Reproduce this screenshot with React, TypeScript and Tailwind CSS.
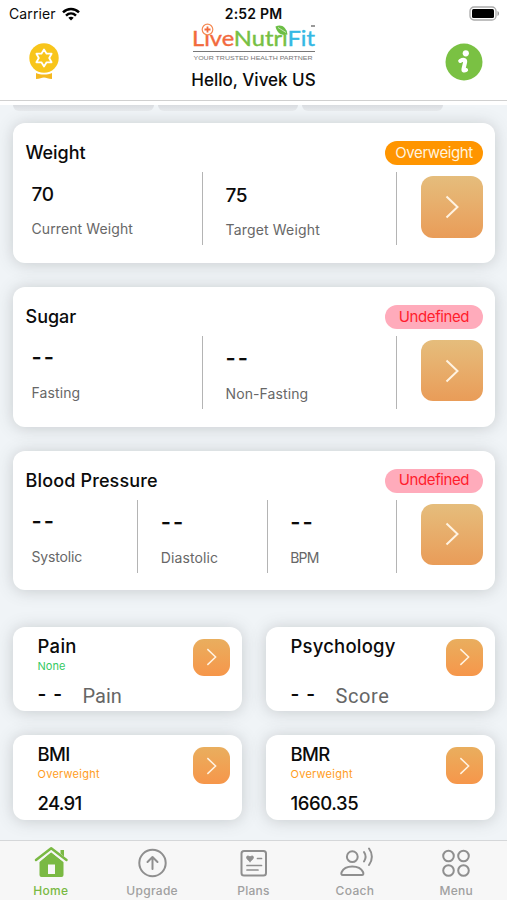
import clsx from 'clsx';
import type { ReactNode } from 'react';

type Metric = { value: string; label: string; labelClass: string };

function Arrow({ small = false }: { small?: boolean }) {
  return (
    <button
      type="button"
      className={clsx(
        'flex shrink-0 items-center justify-center bg-linear-to-b',
        small
          ? 'size-[37px] rounded-[11px] from-[#e9ae5e] to-[#f6964a]'
          : 'size-[61.5px] rounded-[12px] from-[#e5bd7c] to-[#e99c58]',
      )}
    >
      <svg
        viewBox="0 0 14 24"
        className={small ? 'h-[18px] w-[11px]' : 'h-6 w-3.5'}
        fill="none"
        stroke="#fff3e2"
        strokeWidth="2"
      >
        <path d="M1.5 1.5 12.5 12 1.5 22.5" />
      </svg>
    </button>
  );
}

function MetricCard({
  title, titleClass, badge, badgeClass, metrics,
}: { title: string; titleClass?: string; badge: string; badgeClass: string; metrics: Metric[] }) {
  return (
    <section className="h-[139.8px] rounded-[12px] bg-white shadow-[0_1px_16px_rgba(80,85,90,0.26)]">
      <div className="flex h-[49px] items-start justify-between pt-[17px] pr-3 pl-[12.5px]">
        <h2 className={clsx('text-[18px] leading-[26px] font-medium', titleClass)}>{title}</h2>
        <span className={clsx('mt-px flex h-6 w-[98px] items-center justify-center rounded-full text-[15px]', badgeClass)}>
          {badge}
        </span>
      </div>
      <div className="flex">
        <div className="-ml-1 flex h-[73px] w-[388px]">
          {metrics.map((m, i) => (
            <div key={m.label} className={clsx('flex-1 border-r border-[#b4b4b4] pl-[22.5px]', i > 0 && 'pt-px')}>
              {m.value === '--' ? (
                <div className="mt-[8px] h-[28px] text-[22px] leading-[26px] font-semibold tracking-[2px]">--</div>
              ) : (
                <div className="mt-[10px] h-[26px] text-[19px] leading-[26px] font-medium tracking-[-0.3px]">{m.value}</div>
              )}
              <div className={clsx('mt-[11px] text-[14px] leading-5 whitespace-nowrap text-[#676767]', m.labelClass)}>
                {m.label}
              </div>
            </div>
          ))}
        </div>
        <div className="mt-1 ml-6">
          <Arrow />
        </div>
      </div>
    </section>
  );
}

function SmallCard({
  title, titleClass, status, statusClass, children,
}: { title: string; titleClass: string; status?: string; statusClass?: string; children: ReactNode }) {
  return (
    <section className="flex h-[84.5px] justify-between rounded-[12px] bg-white pr-3 pl-[24.500px] shadow-[0_1px_16px_rgba(80,85,90,0.26)]">
      <div>
        <h2 className={clsx('mt-[7px] text-[18.5px] leading-6 font-medium', titleClass)}>{title}</h2>
        <p className={clsx('h-4 text-[11px] leading-4', statusClass)}>{status}</p>
        <div className="mt-[8px] flex h-7 items-center whitespace-nowrap">{children}</div>
      </div>
      <div className="mt-3">
        <Arrow small />
      </div>
    </section>
  );
}

function Unit({ name, className }: { name: string; className?: string }) {
  return (
    <>
      <span className="mt-[-1px] w-[45px] text-[19px] font-semibold tracking-[7px]">--</span>
      <span className={clsx("mt-px font-['Roboto',sans-serif] text-[20px] text-[#666]", className)}>{name}</span>
    </>
  );
}

function Logo() {
  return (
    <svg viewBox="0 0 124 40" className="h-10 w-[124px] overflow-visible" fontFamily="Lato, sans-serif">
      <text x="0" y="23.500" fontSize="21.500" textLength="123" lengthAdjust="spacingAndGlyphs" strokeWidth=".4">
        <tspan fill="#f26a3d" stroke="#f26a3d">Live</tspan>
        <tspan fill="#76c043" stroke="#76c043">Nutri</tspan>
        <tspan fill="#35b8e4" stroke="#35b8e4">Fit</tspan>
      </text>
      <circle cx="15.500" cy="7.500" r="5.300" fill="#fff" stroke="#f58b55" strokeWidth="1.200" />
      <path d="M15.500 4.500v6M12.500 7.500h6" stroke="#f26a3d" strokeWidth="1.800" />
      <path d="M83.500 4.500c5.500-2.500 10.500-.5 12 8-6.500 1.500-10.500-1.500-12-8Z" fill="#6cbe45" />
      <path d="m86 5.500 8 5" stroke="#fff" strokeWidth=".6" />
      <path d="M119 4h4" stroke="#555" strokeWidth="1.200" />
      <path d="M1 29.500h122" stroke="#777" />
      <text x="1.500" y="38" fontSize="5.800" textLength="119" lengthAdjust="spacingAndGlyphs" fill="#777" fontFamily="Liberation Sans, sans-serif">
        YOUR TRUSTED HEALTH PARTNER
      </text>
    </svg>
  );
}

function StatusBar() {
  return (
    <div className="flex h-[26px] items-center justify-between pt-px pr-[7px] pl-[9px] text-[14px]">
      <div className="flex w-[100px] items-center gap-1.5 tracking-[0.1px]">
        Carrier
        <svg viewBox="0 0 18 14" className="h-3.5 w-[18px]" fill="none" stroke="#000" strokeWidth="2.500">
          <path d="M1 5.300c4.600-4.400 11.400-4.400 16 0M4 8.600c2.900-2.700 7.100-2.700 10 0" />
          <path d="M6.300 10.700c1.600-1.400 3.800-1.400 5.400 0L9 13.600Z" fill="#000" stroke="none" />
        </svg>
      </div>
      <div className="font-semibold tracking-[0.2px]">2:52 PM</div>
      <div className="flex w-[102px] justify-end">
        <svg viewBox="0 0 31 15" className="h-[15px] w-[31px]">
          <rect x="1" y="1" width="26" height="13" rx="4" fill="#fff" stroke="#aaa" strokeWidth="1.300" />
          <rect x="3" y="3" width="22" height="9" rx="1.500" />
          <path d="M28.500 5v5c2-.8 2-4.200 0-5Z" fill="#999" />
        </svg>
      </div>
    </div>
  );
}

function MedalIcon() {
  return (
    <svg viewBox="0 0 30 37" className="h-[37px] w-[30px]">
      <path d="M7 30c5 2 11 2 16 0v6c-4-.3-5.500-1.500-8-1.500S11 35.700 7 36Z" fill="#f5b921" />
      <circle cx="15" cy="15" r="14.700" fill="#f8c51b" />
      <path
        d="m15 6.500 2.600 4.200h5l-2.400 4.300 2.400 4.300h-5L15 23.500l-2.600-4.200h-5L9.800 15l-2.400-4.300h5Z"
        fill="none"
        stroke="#fff"
        strokeWidth="1.800"
        strokeLinejoin="round"
      />
    </svg>
  );
}

function InfoIcon() {
  return (
    <svg viewBox="0 0 38 38" className="size-[38px]">
      <circle cx="19" cy="19" r="18.500" fill="#7ac143" />
      <circle cx="20.800" cy="10.300" r="3.100" fill="#fff" />
      <path
        d="M15.200 18c1.500-.9 3.300-1.400 4.300-1 .9.400.8 1.300.6 2.300l-1.600 6.700c-.3 1.700.8 2 2.600 1"
        fill="none"
        stroke="#fff"
        strokeWidth="4"
        strokeLinecap="round"
        strokeLinejoin="round"
      />
    </svg>
  );
}

const outline = {
  viewBox: '0 0 36 32',
  className: 'h-8 w-9',
  fill: 'none',
  stroke: 'currentColor',
  strokeWidth: 2,
  strokeLinecap: 'round',
  strokeLinejoin: 'round',
} as const;

const tabs = [
  {
    label: 'Home',
    icon: (
      <svg viewBox="0 0 36 32" className="h-8 w-9" fill="currentColor">
        <path
          fillRule="evenodd"
          d="M18 6 30.500 16v13a2 2 0 0 1-2 2H8.500a2 2 0 0 1-2-2V16ZM15 18.500V28h7v-9.500Z"
        />
        <path d="M3 15 18.200 3 33.500 15" fill="none" stroke="#f7f7f7" strokeWidth="5" />
        <path d="M27.500 4h3.500v6.500l-3.500-3Z" />
        <path d="M3 14 18.200 2.200 33.500 14" fill="none" stroke="currentColor" strokeWidth="2.500" strokeLinecap="round" strokeLinejoin="round" />
      </svg>
    ),
  },
  {
    label: 'Upgrade',
    icon: (
      <svg {...outline}>
        <circle cx="18.500" cy="17" r="13.200" />
        <path d="M18.500 23V11.500M13.500 16l5-5 5 5" />
      </svg>
    ),
  },
  {
    label: 'Plans',
    icon: (
      <svg {...outline}>
        <rect x="5.500" y="5" width="24.500" height="24.500" rx="2.500" />
        <path d="M21.500 12.500h4M11 19.500h14.500M11 24h11" strokeWidth="1.700" />
        <path d="M14 15.500c-6-4-3-7 0-4.500 3-2.500 6 .5 0 4.500Z" fill="currentColor" strokeWidth="1" />
      </svg>
    ),
  },
  {
    label: 'Coach',
    icon: (
      <svg {...outline}>
        <circle cx="15.300" cy="10.700" r="5.400" />
        <path d="M6 29c-1.800 0-2-1.500-1.300-3C8 18.500 22.500 18.500 26 26c.7 1.500.5 3-1.300 3ZM27 6c2 3 2 6.500 0 9.500M32 2.500c3.800 5 3.800 11.500 0 16.500" />
      </svg>
    ),
  },
  {
    label: 'Menu',
    icon: (
      <svg {...outline}>
        <circle cx="10.500" cy="10" r="5.300" />
        <circle cx="25.500" cy="10" r="5.300" />
        <circle cx="10.500" cy="24.500" r="5.300" />
        <circle cx="25.500" cy="24.500" r="5.300" />
      </svg>
    ),
  },
];

export default function App() {
  return (
    <div className="flex h-[900px] w-[507px] flex-col overflow-hidden bg-[#f0f4f7] font-['Inter',sans-serif] text-[#0b0b0b]">
      <header className="h-[105px] shrink-0 bg-white">
        <div className="h-[101px] border-b border-[#d0d0d0]">
          <StatusBar />
          <div className="flex justify-between pr-[24px] pl-[29px]">
            <div className="w-[60px] pt-[17px]"><MedalIcon /></div>
            <div className="-mt-1 flex flex-col items-center">
              <Logo />
              <h1 className="mt-[5px] text-[17px] leading-[26px] font-medium whitespace-nowrap">Hello, Vivek US</h1>
            </div>
            <div className="flex w-[65px] justify-end pt-[17px]"><InfoIcon /></div>
          </div>
        </div>
      </header>

      <main className="flex flex-1 flex-col pr-3 pl-[13px]">
        <div className="flex h-1.5 gap-1">
          <div className="flex-1 rounded-b-lg bg-linear-to-b from-[#d9dce0] to-[#e8ebee]" />
          <div className="flex-1 rounded-b-lg bg-linear-to-b from-[#d9dce0] to-[#e8ebee]" />
          <div className="flex-1 rounded-b-lg bg-linear-to-b from-[#d9dce0] to-[#e8ebee]" />
          <div className="w-12" />
        </div>
        <div className="mt-3 flex flex-col gap-6">
          <MetricCard
            title="Weight"
            titleClass="tracking-[-0.05px]"
            badge="Overweight"
            badgeClass="bg-[#ff9500] text-[#fff3df] tracking-[-0.4px]"
            metrics={[
              { value: '70', label: 'Current Weight', labelClass: 'tracking-[0.1px]' },
              { value: '75', label: 'Target Weight', labelClass: 'tracking-[0.17px]' },
            ]}
          />
          <MetricCard
            title="Sugar"
            badge="Undefined"
            badgeClass="bg-[#ffabbb] text-[#ff1d2d] tracking-[-0.4px]"
            metrics={[
              { value: '--', label: 'Fasting', labelClass: 'tracking-[0.1px]' },
              { value: '--', label: 'Non-Fasting', labelClass: 'tracking-[0.1px]' },
            ]}
          />
          <MetricCard
            title="Blood Pressure"
            titleClass="tracking-[0.15px]"
            badge="Undefined"
            badgeClass="bg-[#ffabbb] text-[#ff1d2d] tracking-[-0.4px]"
            metrics={[
              { value: '--', label: 'Systolic', labelClass: 'tracking-[-0.15px]' },
              { value: '--', label: 'Diastolic', labelClass: 'tracking-[0.1px]' },
              { value: '--', label: 'BPM', labelClass: 'tracking-[-0.8px]' },
            ]}
          />
        </div>

        <div className="mt-[36.4px] grid grid-cols-2 gap-6">
          <SmallCard title="Pain" titleClass="tracking-[0.3px]" status="None" statusClass="text-[#35c962]">
            <Unit name="Pain" />
          </SmallCard>
          <SmallCard title="Psychology" titleClass="tracking-[0.2px]">
            <Unit name="Score" className="tracking-[0.6px]" />
          </SmallCard>
          <SmallCard title="BMI" titleClass="tracking-[-0.7px]" status="Overweight" statusClass="text-[#ff9d1c] tracking-[0.25px]">
            <span className="text-[18.5px] font-medium tracking-[-0.7px]">24.91</span>
          </SmallCard>
          <SmallCard title="BMR" titleClass="tracking-[-0.6px]" status="Overweight" statusClass="text-[#ff9d1c] tracking-[0.25px]">
            <span className="text-[18.5px] font-medium tracking-[-0.4px]">1660.35</span>
          </SmallCard>
        </div>
      </main>

      <nav className="flex h-[60px] shrink-0 border-t border-[#d5d7d9] bg-[#f7f7f7]">
        {tabs.map((tab) => (
          <div
            key={tab.label}
            className={clsx('flex flex-1 flex-col items-center pt-[5px]', tab.label === 'Home' ? 'text-[#7ab943]' : 'text-[#8f8f8f]')}
          >
            {tab.icon}
            <span className={clsx('mt-[5px] text-[12px] leading-4 font-medium tracking-[0.3px]', tab.label !== 'Home' && 'text-[#a0a0a0]')}>
              {tab.label}
            </span>
          </div>
        ))}
      </nav>
    </div>
  );
}
